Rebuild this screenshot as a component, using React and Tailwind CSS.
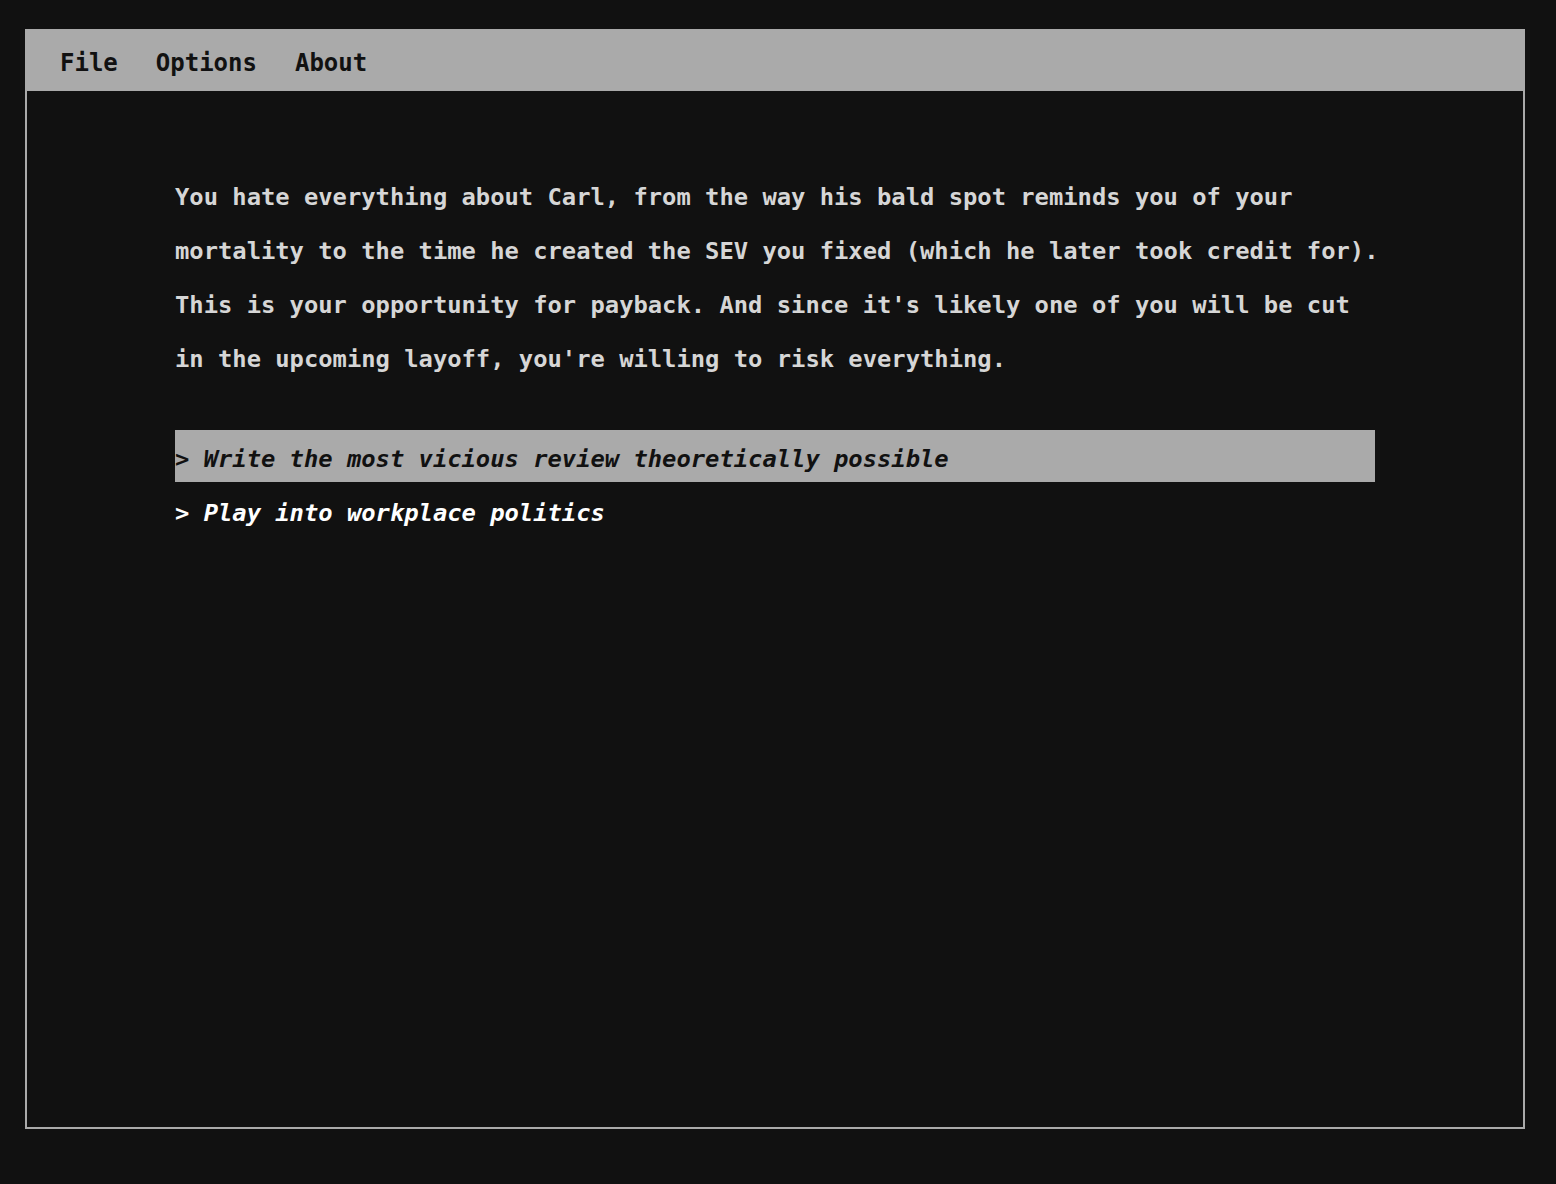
import React, { useState } from 'react';

const story = [
  "You hate everything about Carl, from the way his bald spot reminds you of your",
  "mortality to the time he created the SEV you fixed (which he later took credit for).",
  "This is your opportunity for payback. And since it's likely one of you will be cut",
  "in the upcoming layoff, you're willing to risk everything.",
];

const choices = [
  "Write the most vicious review theoretically possible",
  "Play into workplace politics",
];

const mono = { fontFamily: '"DejaVu Sans Mono", "Liberation Mono", monospace' };

function App() {
  const [active, setActive] = useState(0);

  return (
    <div className="min-h-screen bg-[#111111] pt-[29px] pl-[25px]" style={mono}>
      <div className="w-[1500px] h-[1100px] border-2 border-[#aaaaaa] flex flex-col">
        {/* Menu bar */}
        <div className="h-[60px] bg-[#aaaaaa] flex items-center gap-[38px] pl-[33px] pt-[4px] text-[24px] font-bold text-[#111111]">
          <span>File</span>
          <span>Options</span>
          <span>About</span>
        </div>

        {/* Story */}
        <div className="w-[1200px] mx-auto mt-[79px]">
          <div className="text-[23.8px] leading-[54px] font-bold text-[#d6d6d6] whitespace-pre">
            {story.map((line, i) => (
              <div key={i}>{line}</div>
            ))}
          </div>

          <div className="mt-[44px] flex flex-col gap-[2px]">
            {choices.map((c, i) => (
              <div
                key={i}
                onMouseEnter={() => setActive(i)}
                className={`h-[52px] pt-[6px] leading-[46px] text-[23.8px] font-bold italic cursor-pointer ${
                  active === i ? 'bg-[#aaaaaa] text-[#111111]' : 'text-white'
                }`}
              >
                {'> ' + c}
              </div>
            ))}
          </div>
        </div>
      </div>
    </div>
  );
}

export default App;
